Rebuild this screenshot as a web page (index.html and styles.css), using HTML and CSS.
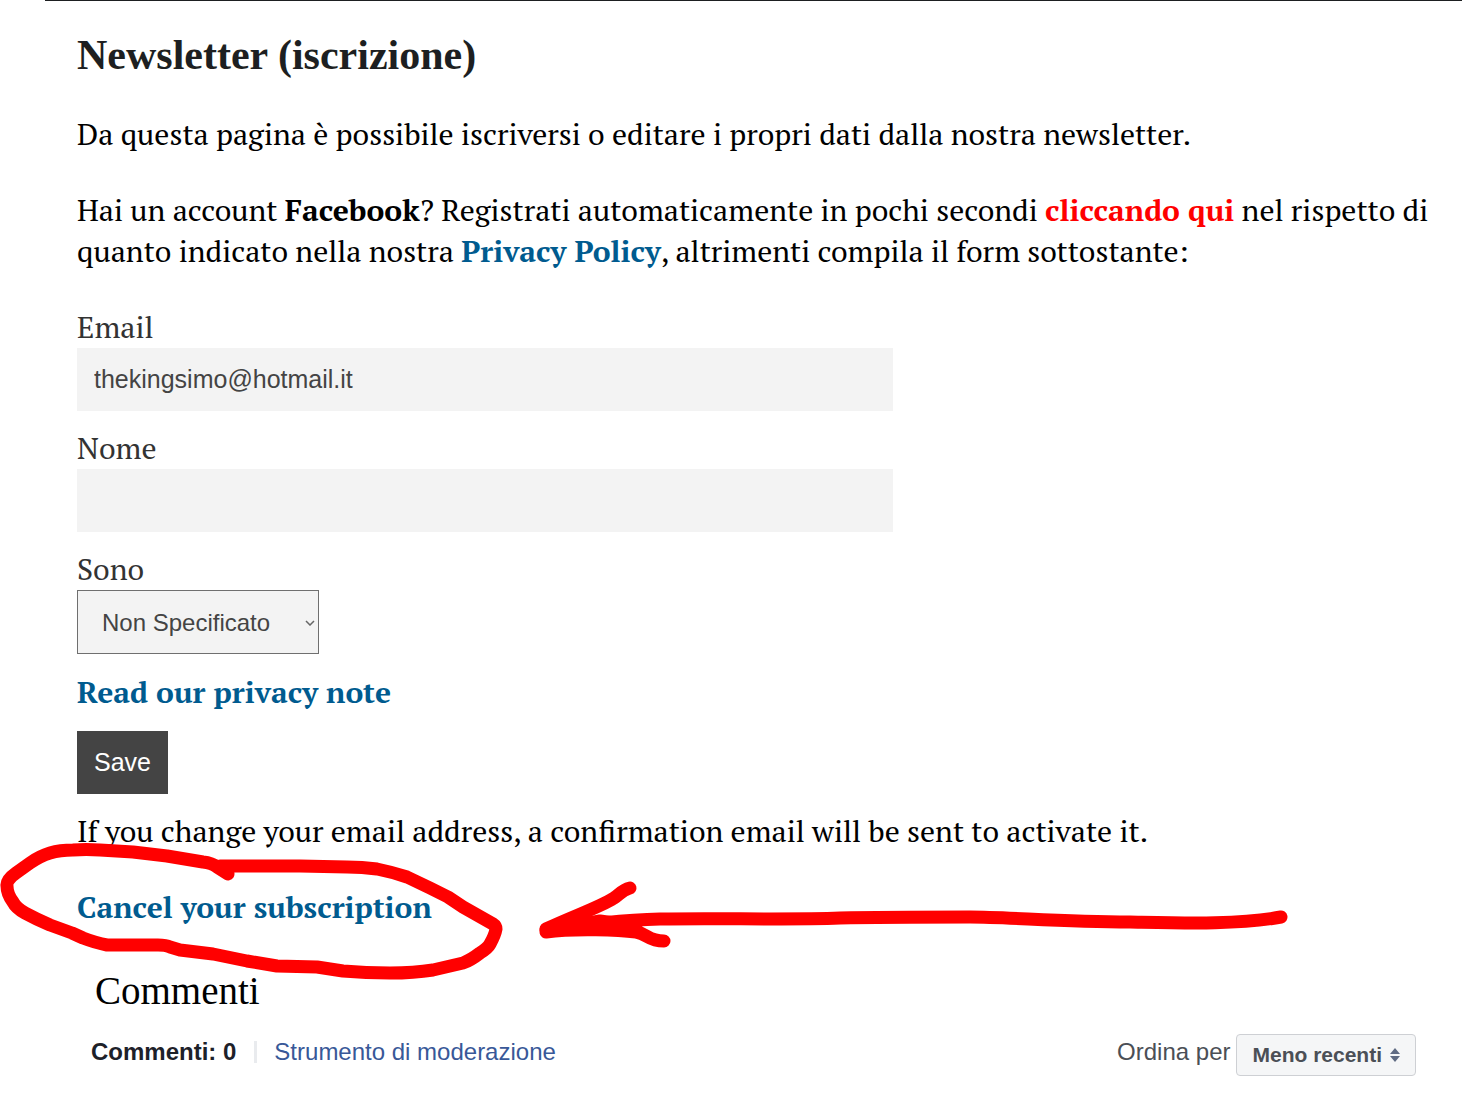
FILE: index.html
```html
<!DOCTYPE html>
<html lang="it">
<head>
<meta charset="utf-8">
<meta name="viewport" content="width=device-width, initial-scale=1">
<title>Newsletter (iscrizione)</title>
<link rel="stylesheet" href="styles.css">
</head>
<body>
<main class="page">
  <h1 class="title">Newsletter (iscrizione)</h1>
  <p class="text">Da questa pagina è possibile iscriversi o editare i propri dati dalla nostra newsletter.</p>
  <p class="text">Hai un account <strong>Facebook</strong>? Registrati automaticamente in pochi secondi <a class="link link-alert" href="#">cliccando qui</a> nel rispetto di quanto indicato nella nostra <a class="link" href="#">Privacy Policy</a>, altrimenti compila il form sottostante:</p>

  <form class="form">
    <div class="field">
      <label class="label" for="email">Email</label>
      <input class="input" id="email" type="text" value="thekingsimo@hotmail.it">
    </div>
    <div class="field">
      <label class="label" for="name">Nome</label>
      <input class="input" id="name" type="text">
    </div>
    <div class="field">
      <label class="label" for="sex">Sono</label>
      <div class="select-wrap">
        <select class="select" id="sex"><option>Non Specificato</option></select>
        <svg class="chevron" viewBox="0 0 10 6" aria-hidden="true"><path d="M1 1l4 4 4-4"/></svg>
      </div>
    </div>
    <a class="link" href="#">Read our privacy note</a>
    <button class="save" type="button">Save</button>
  </form>

  <p class="text">If you change your email address, a confirmation email will be sent to activate it.</p>
  <p class="text cancel">
    <a class="link" href="#">Cancel your subscription</a>
    <svg class="marker" viewBox="0 0 1300 150" aria-hidden="true">
      <path d="M228 34L217 27Q212 23 203 22L167 16L133 12L100 10Q86 9 73 10Q60 10 50 13Q40 16 30 23L16 33Q6 40 7 46Q7 54 13 62Q16 68 25 73Q36 79 50 85L72 93L83 98Q96 103 107 105L133 105L158 105Q166 105 170 107L180 110L213 114L247 121L277 126L317 127L343 131Q366 133 390 133Q414 133 433 130L463 123Q471 120 480 113Q488 108 490 104Q495 95 496 89Q496 86 493 84L463 67L448 57L430 48L407 37Q392 32 377 29Q362 27 347 27L300 26L220 26"/>
      <path d="M630 48C622 50 620 54 614 58C598 68 576 75 546 89"/>
      <path d="M546 92C575 88 620 90 636 92C648 94 648 101 664 101"/>
      <path d="M546 90C580 84 630 80 660 79C720 78 790 80 840 78C880 77 930 77 970 77C1010 77 1060 82 1130 82C1180 83 1240 85 1281 77"/>
      <path d="M550 90L600 81L636 86"/>
    </svg>
  </p>

  <section class="comments">
    <h2 class="comments-title">Commenti</h2>
    <div class="bar">
      <div class="bar-left">
        <strong class="count">Commenti: 0</strong>
        <a class="tool" href="#">Strumento di moderazione</a>
      </div>
      <div class="bar-right">
        <span>Ordina per</span>
        <button class="sort" type="button">Meno recenti
          <svg class="arrows" viewBox="0 0 10 14" aria-hidden="true"><path d="M0 6L5 0l5 6zM0 8h10l-5 6z"/></svg>
        </button>
      </div>
    </div>
  </section>
</main>
</body>
</html>
```
FILE: styles.css
```css
* {
  box-sizing: border-box;
}

body {
  margin: 0;
  background: #fff;
  color: #000;
  font: 30px/41px "PT Serif", "Liberation Serif", serif;
}

.page {
  margin-left: 45px;
  padding: 28px 32px 19px;
  border-top: 1px solid #1d1f21;
}

.title {
  margin: 0 0 33px;
  color: #1d1f21;
  font: bold 42px/52px "Liberation Serif", serif;
}

.text {
  margin: 0 0 35px;
}

.link {
  color: #005b8f;
  font-weight: bold;
  text-decoration: none;
}

.link-alert {
  color: #f00;
}

.form {
  display: flex;
  flex-direction: column;
  align-items: flex-start;
  gap: 18px;
  margin: 36px 0 17px;
}

.field {
  display: flex;
  flex-direction: column;
  align-items: flex-start;
  width: 100%;
}

.label {
  padding-bottom: 2px;
  color: #333;
  line-height: 38px;
}

.input,
.select,
.save {
  height: 63px;
  border: 0;
  border-radius: 0;
  background: #f3f3f3;
  color: #444;
  font: 25px/29px "Liberation Sans", sans-serif;
}

.input {
  width: 100%;
  max-width: 816px;
  padding: 0 17px;
}

.select-wrap {
  position: relative;
}

.select {
  height: 64px;
  width: 242px;
  padding: 0 24px;
  border: 1px solid #6f6f6f;
  font-size: 24px;
  appearance: none;
}

.chevron {
  position: absolute;
  top: 30px;
  right: 4px;
  width: 10px;
  height: 6px;
  fill: none;
  stroke: #666;
  stroke-width: 1.5;
}

.save {
  padding: 0 17px;
  background: #444;
  color: #fff;
}

.cancel {
  position: relative;
}

/* Hand-drawn pointer around the cancel link */
.marker {
  position: absolute;
  top: -47px;
  left: -77px;
  width: 1300px;
  height: 150px;
  fill: none;
  stroke: #f00;
  stroke-width: 13px;
  stroke-linecap: round;
  stroke-linejoin: round;
  pointer-events: none;
}

.comments {
  padding: 3px 14px 0;
}

.comments-title {
  margin: 0 0 18px 4px;
  font: 39px/50px "Liberation Serif", serif;
}

.bar {
  display: flex;
  flex-wrap: wrap;
  justify-content: space-between;
  align-items: flex-start;
  font: 24px/36px "Liberation Sans", sans-serif;
}

.bar-left,
.bar-right {
  display: flex;
  align-items: flex-start;
}

.bar-left {
  align-items: center;
}

.count {
  padding-right: 18px;
  border-right: 3px solid #e9ebee;
  color: #1d2129;
  line-height: 22px;
}

.tool {
  padding-left: 17px;
  color: #385898;
  text-decoration: none;
}

.bar-right {
  gap: 6px;
  color: #4b4f56;
}

.sort {
  display: flex;
  align-items: center;
  gap: 8px;
  height: 42px;
  padding: 0 15px;
  border: 1px solid #ced0d4;
  border-radius: 4px;
  background: #f5f6f7;
  color: #4b4f56;
  font: bold 21px/24px "Liberation Sans", sans-serif;
}

.arrows {
  width: 10px;
  height: 14px;
  fill: #606b83;
}
```
